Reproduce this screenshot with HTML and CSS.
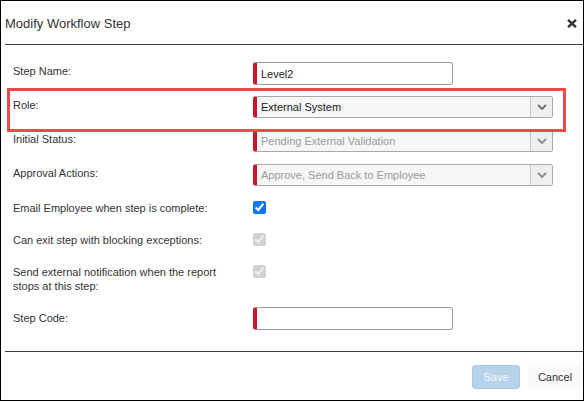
FILE: index.html
```html
<!DOCTYPE html>
<html>
<head>
<meta charset="utf-8">
<link rel="stylesheet" href="styles.css">
</head>
<body>
<div class="dialog">
  <div class="header">
    <span class="title">Modify Workflow Step</span>
    <button class="close" aria-label="Close">
      <svg width="10" height="9" viewBox="0 0 10 9"><path d="M1 0.8 L9 8.2 M9 0.8 L1 8.2" stroke="#333" stroke-width="2.4" stroke-linecap="butt" fill="none"/></svg>
    </button>
  </div>
  <div class="body">
    <div class="row field">
      <label class="lbl">Step Name:</label>
      <input class="input" type="text" value="Level2">
    </div>
    <div class="row field highlight">
      <label class="lbl">Role:</label>
      <div class="select"><span class="val">External System</span><span class="caret"><svg width="10" height="6" viewBox="0 0 10 6"><path d="M1 1 L5 5 L9 1" stroke="#707070" stroke-width="1.8" fill="none"/></svg></span></div>
    </div>
    <div class="row field">
      <label class="lbl">Initial Status:</label>
      <div class="select disabled"><span class="val">Pending External Validation</span><span class="caret"><svg width="10" height="6" viewBox="0 0 10 6"><path d="M1 1 L5 5 L9 1" stroke="#8a8a8a" stroke-width="1.8" fill="none"/></svg></span></div>
    </div>
    <div class="row field last">
      <label class="lbl">Approval Actions:</label>
      <div class="select disabled"><span class="val">Approve, Send Back to Employee</span><span class="caret"><svg width="10" height="6" viewBox="0 0 10 6"><path d="M1 1 L5 5 L9 1" stroke="#8a8a8a" stroke-width="1.8" fill="none"/></svg></span></div>
    </div>
    <div class="row check">
      <label class="lbl">Email Employee when step is complete:</label>
      <input class="cb" type="checkbox" checked>
    </div>
    <div class="row check">
      <label class="lbl">Can exit step with blocking exceptions:</label>
      <input class="cb" type="checkbox" checked disabled>
    </div>
    <div class="row check tall">
      <label class="lbl">Send external notification when the report stops at this step:</label>
      <input class="cb" type="checkbox" checked disabled>
    </div>
    <div class="row field code">
      <label class="lbl">Step Code:</label>
      <input class="input" type="text" value="">
    </div>
  </div>
  <div class="footer">
    <button class="btn save" disabled>Save</button>
    <button class="btn cancel">Cancel</button>
  </div>
</div>
</body>
</html>
```
FILE: styles.css
```css
* { box-sizing: border-box; }
html, body { margin: 0; padding: 0; background: #fff; }
body { font-family: "Liberation Sans", Arial, sans-serif; color: #333; }

.dialog {
  width: 584px;
  height: 401px;
  border: 1px solid #000;
  background: #fff;
  display: flex;
  flex-direction: column;
}

.header {
  height: 44px;
  margin-left: 4px;
  padding: 2px 6px 0 0;
  border-bottom: 1px solid #3a3d40;
  display: flex;
  align-items: center;
  justify-content: space-between;
  flex: none;
}
.title { font-size: 13px; color: #333; }
.close {
  border: 0; background: none; padding: 0; margin: 0;
  width: 10px; height: 9px; display: block; cursor: pointer;
}
.close svg { display: block; }

.body {
  height: 306px;
  padding: 17px 0 0 12px;
  flex: none;
}

.row { display: flex; align-items: flex-start; }
.lbl {
  width: 240px;
  flex: none;
  padding-right: 20px;
  font-size: 11px;
  line-height: 14px;
  color: #333;
}
.field { height: 22px; margin-bottom: 12px; }
.field .lbl { padding-top: 2px; }
.field.last { margin-bottom: 15px; }
.field.code .lbl { padding-top: 4px; }

.check { min-height: 17px; margin-bottom: 15px; }
.check .lbl { padding-top: 0; }
.check.tall { min-height: 28px; margin-bottom: 14px; }

.input {
  width: 200px;
  height: 23px;
  margin: 0;
  border: 1px solid #9b9b9b;
  border-left: 4px solid #c8172b;
  border-radius: 3px;
  padding: 0 0 0 4px;
  font-family: "Liberation Sans", Arial, sans-serif;
  font-size: 11px;
  color: #222;
  background: #fff;
  outline: none;
}

.select {
  width: 300px;
  height: 22px;
  border: 1px solid #a8a8a8;
  border-left: 4px solid #c8172b;
  border-radius: 3px;
  background: #f6f6f6;
  display: flex;
  align-items: stretch;
  font-size: 11px;
  color: #222;
}
.select .val { flex: 1; padding-left: 4px; line-height: 20px; }
.select.disabled .val { color: #9a9a9a; }
.caret {
  width: 22px;
  flex: none;
  border-left: 1px solid #c4c4c4;
  background: #efefef;
  display: flex;
  align-items: center;
  justify-content: center;
  border-radius: 0 2px 2px 0;
}
.caret svg { display: block; }

.highlight { position: relative; }
.highlight::after {
  content: "";
  position: absolute;
  left: -6px;
  top: -8px;
  width: 553px;
  height: 38px;
  border: 3px solid #f24848;
  pointer-events: none;
}

.cb {
  width: 13px;
  height: 13px;
  margin: 0;
  accent-color: #0a75ff;
}

.footer {
  flex: 1;
  margin-left: 4px;
  border-top: 1px solid #3a3d40;
  display: flex;
  justify-content: flex-end;
  align-items: flex-start;
  padding: 13px 1px 0 0;
  gap: 8px;
}
.btn {
  height: 24px;
  font-family: "Liberation Sans", Arial, sans-serif;
  font-size: 11px;
  border-radius: 3px;
  padding: 0;
  margin: 0;
}
.save {
  width: 48px;
  background: #b7d3ea;
  border: 1px solid #a9c9e4;
  color: #f2f7fb;
}
.cancel {
  width: 54px;
  background: #f9f9f9;
  border: 0;
  color: #333;
}
```
